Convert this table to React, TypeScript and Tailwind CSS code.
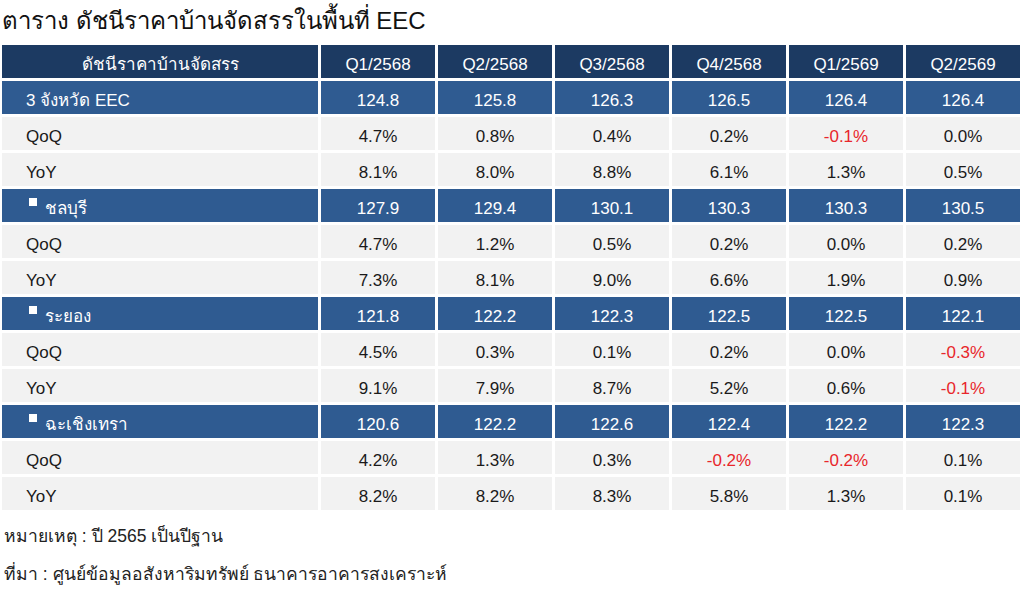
const cols = ["Q1/2568", "Q2/2568", "Q3/2568", "Q4/2568", "Q1/2569", "Q2/2569"]

type Row = { label: string; kind: "total" | "province" | "rate"; values: string[] }

const rows: Row[] = [
  { label: "3 จังหวัด EEC", kind: "total", values: ["124.8", "125.8", "126.3", "126.5", "126.4", "126.4"] },
  { label: "QoQ", kind: "rate", values: ["4.7%", "0.8%", "0.4%", "0.2%", "-0.1%", "0.0%"] },
  { label: "YoY", kind: "rate", values: ["8.1%", "8.0%", "8.8%", "6.1%", "1.3%", "0.5%"] },
  { label: "ชลบุรี", kind: "province", values: ["127.9", "129.4", "130.1", "130.3", "130.3", "130.5"] },
  { label: "QoQ", kind: "rate", values: ["4.7%", "1.2%", "0.5%", "0.2%", "0.0%", "0.2%"] },
  { label: "YoY", kind: "rate", values: ["7.3%", "8.1%", "9.0%", "6.6%", "1.9%", "0.9%"] },
  { label: "ระยอง", kind: "province", values: ["121.8", "122.2", "122.3", "122.5", "122.5", "122.1"] },
  { label: "QoQ", kind: "rate", values: ["4.5%", "0.3%", "0.1%", "0.2%", "0.0%", "-0.3%"] },
  { label: "YoY", kind: "rate", values: ["9.1%", "7.9%", "8.7%", "5.2%", "0.6%", "-0.1%"] },
  { label: "ฉะเชิงเทรา", kind: "province", values: ["120.6", "122.2", "122.6", "122.4", "122.2", "122.3"] },
  { label: "QoQ", kind: "rate", values: ["4.2%", "1.3%", "0.3%", "-0.2%", "-0.2%", "0.1%"] },
  { label: "YoY", kind: "rate", values: ["8.2%", "8.2%", "8.3%", "5.8%", "1.3%", "0.1%"] },
]

export default function App() {
  return (
    <div className="w-[1024px] h-[593px] bg-white overflow-hidden font-['Liberation_Sans',Arial,sans-serif]">
      <h1 className="pl-[2px] pt-[5px] h-[45px] text-[24px] leading-[32px] text-[#111]">
        ตาราง ดัชนีราคาบ้านจัดสรรในพื้นที่ EEC
      </h1>

      <div className="ml-[2px] w-[1019px] grid grid-cols-[316px_repeat(6,114px)] gap-[3px] text-[17px]">
        {/* Header */}
        <div className="h-[33px] pt-[6px] bg-[#1c3a62] text-white flex items-center justify-center">
          ดัชนีราคาบ้านจัดสรร
        </div>
        {cols.map((c) => (
          <div key={c} className="h-[33px] pt-[6px] bg-[#1c3a62] text-white flex items-center justify-center">
            {c}
          </div>
        ))}

        {rows.map((row, i) => {
          const blue = row.kind !== "rate"
          const cell = blue ? "bg-[#2f5b91] text-white" : "bg-[#f2f2f2] text-[#1a1a1a]"
          return [
            <div key={`l${i}`} className={`h-[33px] pt-[7px] flex items-center pl-[24px] ${cell}`}>
              {row.kind === "province" && (
                <span className="w-[8px] h-[8px] bg-white mr-[8px] self-start mt-[2px] ml-[3px]" />
              )}
              {row.label}
            </div>,
            ...row.values.map((v, j) => (
              <div
                key={`${i}-${j}`}
                className={`h-[33px] pt-[7px] flex items-center justify-center ${cell} ${
                  v.startsWith("-") ? "text-[#e8262b]" : ""
                }`}
              >
                {v}
              </div>
            )),
          ]
        })}
      </div>

      <div className="pl-[4px] pt-[7px] text-[17.5px] leading-[38px] text-[#222]">
        <p>หมายเหตุ : ปี 2565 เป็นปีฐาน</p>
        <p>ที่มา : ศูนย์ข้อมูลอสังหาริมทรัพย์ ธนาคารอาคารสงเคราะห์</p>
      </div>
    </div>
  )
}
